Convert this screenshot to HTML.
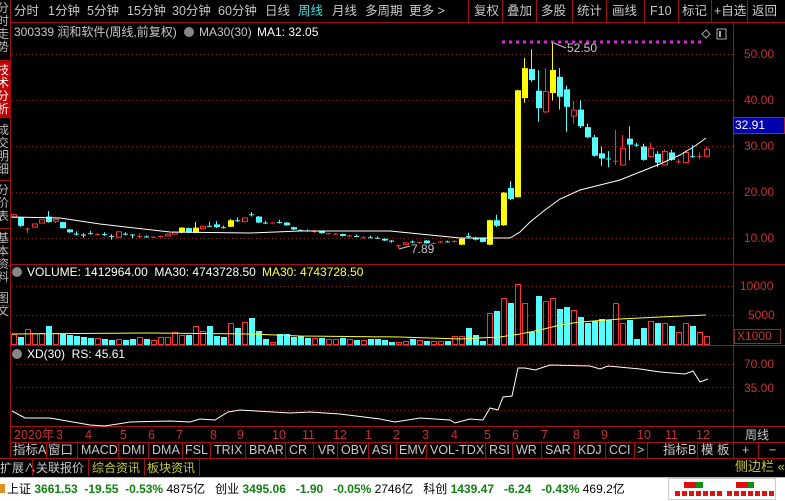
<!DOCTYPE html>
<html><head><meta charset="utf-8">
<style>
*{margin:0;padding:0;box-sizing:border-box}
body{width:785px;height:501px;background:#000;overflow:hidden;position:relative;font-family:"Liberation Sans","Noto Sans CJK SC",sans-serif;font-size:12px;line-height:14px;color:#c8c8c8}
.a{position:absolute;white-space:nowrap}
.tb{top:4px;color:#c8c8c8;font-size:12.5px}
.rl{position:absolute;background:#a01010}
.ax{position:absolute;color:#c83030;font-size:12px;left:744px}
.ind{top:443px;font-size:12.5px;color:#c8c8c8}
.dt{top:428px;color:#c83030;font-size:12.5px}
.st{top:482px;font-size:12px;color:#000}
.g{color:#108010;font-weight:bold}
.vt{position:absolute;left:-3px;font-size:12px;line-height:13px;width:14px;white-space:normal;color:#bbb}
</style></head><body>
<!-- left strip -->
<div class="a" style="left:0;top:0;width:10px;height:458px;background:#000;overflow:hidden">
 <div class="a" style="left:0;top:60px;width:10px;height:58px;background:#c00000"></div>
 <div class="vt" style="top:2px">分时走势</div>
 <div class="vt" style="top:64px;color:#fff">技术分析</div>
 <div class="vt" style="top:124px">成交明细</div>
 <div class="vt" style="top:184px">分价表</div>
 <div class="vt" style="top:232px">基本资料</div>
 <div class="vt" style="top:292px">图文</div>
</div>
<div class="rl" style="left:0;top:60px;width:10px;height:1px"></div>
<div class="rl" style="left:0;top:180px;width:10px;height:1px"></div>
<div class="rl" style="left:0;top:228px;width:10px;height:1px"></div>
<div class="rl" style="left:0;top:265px;width:10px;height:1px"></div>
<div class="rl" style="left:0;top:305px;width:10px;height:1px"></div>
<div class="rl" style="left:10px;top:0;width:1px;height:458px"></div>
<!-- toolbar -->
<div class="a tb" style="left:14px">分时</div>
<div class="a tb" style="left:48px">1分钟</div>
<div class="a tb" style="left:87px">5分钟</div>
<div class="a tb" style="left:127px">15分钟</div>
<div class="a tb" style="left:172px">30分钟</div>
<div class="a tb" style="left:218px">60分钟</div>
<div class="a tb" style="left:265px">日线</div>
<div class="a tb" style="left:298px;color:#40e0e0">周线</div>
<div class="a tb" style="left:332px">月线</div>
<div class="a tb" style="left:365px">多周期</div>
<div class="a tb" style="left:409px">更多 &gt;</div>
<div class="a tb" style="left:474px">复权</div>
<div class="a tb" style="left:507px">叠加</div>
<div class="a tb" style="left:541px">多股</div>
<div class="a tb" style="left:577px">统计</div>
<div class="a tb" style="left:612px">画线</div>
<div class="a tb" style="left:650px">F10</div>
<div class="a tb" style="left:682px">标记</div>
<div class="a tb" style="left:714px">+自选</div>
<div class="a tb" style="left:752px">返回</div>
<div class="rl" style="left:468px;top:0;width:1px;height:22px"></div>
<div class="rl" style="left:502px;top:0;width:1px;height:22px"></div>
<div class="rl" style="left:536px;top:0;width:1px;height:22px"></div>
<div class="rl" style="left:572px;top:0;width:1px;height:22px"></div>
<div class="rl" style="left:606px;top:0;width:1px;height:22px"></div>
<div class="rl" style="left:644px;top:0;width:1px;height:22px"></div>
<div class="rl" style="left:678px;top:0;width:1px;height:22px"></div>
<div class="rl" style="left:711px;top:0;width:1px;height:22px"></div>
<div class="rl" style="left:747px;top:0;width:1px;height:22px"></div>
<div class="rl" style="left:10px;top:22px;width:775px;height:1px"></div>
<!-- titles -->
<div class="a" style="left:14px;top:25px;color:#c8c8c8">300339 润和软件(周线,前复权)</div>
<div class="a" style="left:184px;top:27px;width:10px;height:10px;border-radius:5px;background:#888"></div>
<div class="a" style="left:199px;top:25px;color:#c8c8c8">MA30(30)</div>
<div class="a" style="left:257px;top:25px;color:#fff">MA1: 32.05</div>
<div class="a" style="left:12px;top:267px;width:10px;height:10px;border-radius:5px;background:#888"></div>
<div class="a" style="left:27px;top:265px;color:#fff">VOLUME: 1412964.00&nbsp; MA30: 4743728.50</div>
<div class="a" style="left:262px;top:265px;color:#ffff40">MA30: 4743728.50</div>
<div class="a" style="left:12px;top:349px;width:10px;height:10px;border-radius:5px;background:#888"></div>
<div class="a" style="left:27px;top:347px;color:#fff">XD(30)&nbsp; RS: 45.61</div>
<!-- axis -->
<div class="rl" style="left:733px;top:22px;width:1px;height:420px"></div>
<div class="ax" style="top:47px">50.00</div>
<div class="ax" style="top:93px">40.00</div>
<div class="a" style="left:733px;top:117px;width:52px;height:17px;background:#0000b0;border:1px solid #b02020;color:#fff;padding-left:1px;line-height:15px">32.91</div>
<div class="ax" style="top:139px">30.00</div>
<div class="ax" style="top:185px">20.00</div>
<div class="ax" style="top:231px">10.00</div>
<div class="ax" style="top:279px;left:740px">10000</div>
<div class="ax" style="top:308px;left:748px">5000</div>
<div class="a" style="left:734px;top:329px;width:47px;height:15px;border:1px solid #803030;color:#c83030;line-height:13px;padding-left:2px">X1000</div>
<div class="ax" style="top:357px">70.00</div>
<div class="ax" style="top:381px">35.00</div>
<div class="rl" style="left:10px;top:264px;width:775px;height:1px"></div>
<div class="rl" style="left:10px;top:345px;width:775px;height:1px"></div>
<div class="rl" style="left:10px;top:426px;width:775px;height:1px"></div>
<svg class="a" style="left:0;top:0" width="785" height="501" id="sv">
<g stroke="#802020" stroke-dasharray="1,3" stroke-width="1">
<line x1="12" y1="54.5" x2="733" y2="54.5"/><line x1="12" y1="100.5" x2="733" y2="100.5"/><line x1="12" y1="146.5" x2="733" y2="146.5"/><line x1="12" y1="192.5" x2="733" y2="192.5"/><line x1="12" y1="238.5" x2="733" y2="238.5"/>
<line x1="12" y1="286.5" x2="733" y2="286.5"/><line x1="12" y1="315.5" x2="733" y2="315.5"/>
<line x1="12" y1="364.5" x2="733" y2="364.5"/><line x1="12" y1="387.5" x2="733" y2="387.5"/><line x1="12" y1="410.5" x2="733" y2="410.5"/>
</g>
<line x1="502" y1="42" x2="702" y2="42" stroke="#e020e0" stroke-width="3" stroke-dasharray="3,4"/>
<g id="cd"></g>
<polyline fill="none" stroke="#fff" stroke-width="1" points="12,217 60,218 100,224 170,232 250,233 300,231 390,231 430,235 460,238 510,238 520,232 530,222 545,210 560,199 580,190 600,185 620,180 640,172 660,164 680,155 695,146 706,138"/>
<polyline fill="none" stroke="#ffff30" stroke-width="1" points="12,334 150,333 250,334 300,336 400,337 460,339 500,337 520,334 540,330 560,325 580,322 620,319 660,317 706,315"/>
<polyline fill="none" stroke="#fff" stroke-width="1" points="12,411 25,418 50,418 90,425 105,426 130,422 170,421 190,422 200,419 215,420 228,412 240,410 290,413 310,412 340,414 380,419 395,422 420,418 450,420 455,423 470,419 483,420 490,408 498,410 503,397 512,396 518,368 525,368 535,370 550,365 590,366 600,369 608,366 640,369 660,372 685,374 693,371 700,382 708,379"/>
<text x="567" y="52" fill="#c8c8c8" font-size="12" font-family="Liberation Sans">52.50</text>
<line x1="554" y1="43" x2="566" y2="48" stroke="#c8c8c8"/>
<text x="411" y="253" fill="#c8c8c8" font-size="12" font-family="Liberation Sans">7.89</text>
<line x1="399" y1="249" x2="410" y2="246" stroke="#c8c8c8"/>
<path d="M706 30 l4 4 -4 4 -4 -4z" fill="none" stroke="#aaa"/>
<rect x="717" y="29" width="9" height="10" fill="none" stroke="#aaa"/><rect x="719" y="31" width="2" height="6" fill="#aaa"/>
</svg>
<!-- date axis -->
<div class="a dt" style="left:14px">2020年</div>
<div class="a dt" style="left:56px">3</div><div class="a dt" style="left:85px">4</div><div class="a dt" style="left:120px">5</div><div class="a dt" style="left:148px">6</div><div class="a dt" style="left:176px">7</div><div class="a dt" style="left:210px">8</div><div class="a dt" style="left:237px">9</div><div class="a dt" style="left:272px">10</div><div class="a dt" style="left:302px">11</div><div class="a dt" style="left:333px">12</div><div class="a dt" style="left:365px">1</div><div class="a dt" style="left:393px">2</div><div class="a dt" style="left:422px">3</div><div class="a dt" style="left:451px">4</div><div class="a dt" style="left:484px">5</div><div class="a dt" style="left:512px">6</div><div class="a dt" style="left:541px">7</div><div class="a dt" style="left:573px">8</div><div class="a dt" style="left:601px">9</div><div class="a dt" style="left:637px">10</div><div class="a dt" style="left:665px">11</div><div class="a dt" style="left:696px">12</div>
<div class="a" style="left:745px;top:428px;color:#c8c8c8">周线</div>
<div class="rl" style="left:10px;top:442px;width:775px;height:1px"></div>
<!-- indicator tabs -->
<div class="a ind" style="left:13px">指标A</div><div class="a ind" style="left:48px">窗口</div><div class="a ind" style="left:81px">MACD</div><div class="a ind" style="left:122px">DMI</div><div class="a ind" style="left:152px">DMA</div><div class="a ind" style="left:185px">FSL</div><div class="a ind" style="left:214px">TRIX</div><div class="a ind" style="left:249px">BRAR</div><div class="a ind" style="left:289px">CR</div><div class="a ind" style="left:318px">VR</div><div class="a ind" style="left:341px">OBV</div><div class="a ind" style="left:372px">ASI</div><div class="a ind" style="left:399px">EMV</div><div class="a ind" style="left:430px">VOL-TDX</div><div class="a ind" style="left:489px">RSI</div><div class="a ind" style="left:516px">WR</div><div class="a ind" style="left:545px">SAR</div><div class="a ind" style="left:578px">KDJ</div><div class="a ind" style="left:609px">CCI</div><div class="a ind" style="left:637px">&gt;</div><div class="a ind" style="left:663px">指标B</div><div class="a ind" style="left:701px">模 板</div><div class="a ind" style="left:742px">+</div><div class="a ind" style="left:769px">−</div>
<div class="rl" style="left:46px;top:442px;width:1px;height:16px"></div><div class="rl" style="left:77px;top:442px;width:1px;height:16px"></div><div class="rl" style="left:118px;top:442px;width:1px;height:16px"></div><div class="rl" style="left:148px;top:442px;width:1px;height:16px"></div><div class="rl" style="left:182px;top:442px;width:1px;height:16px"></div><div class="rl" style="left:210px;top:442px;width:1px;height:16px"></div><div class="rl" style="left:245px;top:442px;width:1px;height:16px"></div><div class="rl" style="left:285px;top:442px;width:1px;height:16px"></div><div class="rl" style="left:313px;top:442px;width:1px;height:16px"></div><div class="rl" style="left:337px;top:442px;width:1px;height:16px"></div><div class="rl" style="left:368px;top:442px;width:1px;height:16px"></div><div class="rl" style="left:396px;top:442px;width:1px;height:16px"></div><div class="rl" style="left:426px;top:442px;width:1px;height:16px"></div><div class="rl" style="left:485px;top:442px;width:1px;height:16px"></div><div class="rl" style="left:512px;top:442px;width:1px;height:16px"></div><div class="rl" style="left:541px;top:442px;width:1px;height:16px"></div><div class="rl" style="left:574px;top:442px;width:1px;height:16px"></div><div class="rl" style="left:605px;top:442px;width:1px;height:16px"></div><div class="rl" style="left:634px;top:442px;width:1px;height:16px"></div><div class="rl" style="left:647px;top:442px;width:1px;height:16px"></div><div class="rl" style="left:697px;top:442px;width:1px;height:16px"></div><div class="rl" style="left:733px;top:442px;width:1px;height:16px"></div><div class="rl" style="left:758px;top:442px;width:1px;height:16px"></div>
<div class="rl" style="left:0;top:458px;width:785px;height:1px"></div>
<!-- ext row -->
<div class="a" style="left:0;top:461px;color:#c8c8c8">扩展∧</div>
<div class="a" style="left:36px;top:461px;color:#c8c8c8">关联报价</div>
<div class="a" style="left:92px;top:461px;color:#c8c840">综合资讯</div>
<div class="a" style="left:147px;top:461px;color:#c8c840">板块资讯</div>
<div class="rl" style="left:32px;top:458px;width:1px;height:18px"></div><div class="rl" style="left:88px;top:458px;width:1px;height:18px"></div><div class="rl" style="left:144px;top:458px;width:1px;height:18px"></div><div class="rl" style="left:199px;top:458px;width:1px;height:18px"></div>
<div class="a" style="left:735px;top:460px;color:#c8c840;font-size:13px">侧边栏 «</div>
<!-- status bar -->
<div class="a" style="left:0;top:477px;width:785px;height:24px;background:#fff;border-top:1px solid #bbb"></div>
<div class="a" style="left:0;top:484px;width:5px;height:9px;background:#e09020"></div>
<div class="a st" style="left:7px">上证 <span class="g">3661.53&nbsp; -19.55&nbsp; -0.53%</span> 4875亿&nbsp;&nbsp; 创业 <span class="g">3495.06&nbsp;&nbsp; -1.90&nbsp;&nbsp; -0.05%</span> 2746亿&nbsp;&nbsp; 科创 <span class="g">1439.47&nbsp;&nbsp; -6.24&nbsp;&nbsp; -0.43%</span> 469.2亿</div>
<div class="a" style="left:668px;top:478px;width:108px;height:22px;border:1px solid #ccc"></div>
<div class="a" style="left:684px;top:482px;width:12px;height:6px;background:#e01010"></div><div class="a" style="left:696px;top:482px;width:7px;height:6px;background:#109010"></div>
<div class="a" style="left:736px;top:482px;width:12px;height:6px;background:#e01010"></div><div class="a" style="left:748px;top:482px;width:6px;height:6px;background:#109010"></div>
<div class="a" style="left:675px;top:491px;width:48px;height:5px;background:repeating-linear-gradient(90deg,#e01010 0 5px,transparent 5px 7px)"></div>
<div class="a" style="left:727px;top:491px;width:48px;height:5px;background:repeating-linear-gradient(90deg,#e01010 0 5px,transparent 5px 7px)"></div>
<script>
(function(){
var D=[[14.6,15.2,15.4,14.5,'r'],[14.6,12.8,14.8,12.6,'c'],[12.0,12.2,12.4,11.2,'r'],[12.5,13.2,13.3,12.4,'r'],[13.4,14.1,14.2,13.3,'r'],[14.8,13.6,16.0,13.5,'c'],[13.8,14.2,14.3,13.4,'r'],[13.6,12.3,13.7,12.2,'c'],[12.0,11.4,12.1,11.2,'c'],[11.1,11.0,11.6,10.7,'c'],[10.9,10.8,11.2,10.2,'c'],[11.2,11.1,11.7,10.9,'c'],[10.9,11.0,11.2,10.8,'r'],[11.0,10.8,11.4,10.6,'c'],[10.6,10.5,11.0,9.8,'c'],[10.3,11.5,11.6,10.2,'r'],[11.1,10.9,11.4,10.7,'c'],[10.9,10.6,11.0,10.1,'c'],[10.6,10.6,11.1,10.2,'r'],[10.5,10.4,10.7,10.2,'c'],[10.4,10.4,10.6,10.3,'r'],[10.3,10.6,10.7,10.3,'r'],[10.6,11.0,11.1,10.5,'r'],[11.0,11.4,11.6,10.9,'r'],[11.3,12.4,12.5,11.2,'y'],[12.3,11.3,12.4,11.2,'c'],[11.3,12.4,13.6,11.2,'y'],[12.2,12.7,12.8,12.1,'r'],[12.8,12.8,13.7,12.6,'c'],[13.1,12.5,13.8,12.3,'c'],[12.5,12.5,12.9,12.2,'c'],[12.6,14.0,14.3,12.5,'y'],[14.0,14.0,14.6,13.6,'c'],[13.7,14.5,14.6,13.6,'r'],[15.3,15.0,15.8,14.8,'c'],[14.8,13.5,14.9,13.4,'c'],[13.5,13.4,13.9,13.2,'c'],[13.4,13.5,13.6,13.4,'r'],[13.6,13.5,14.1,13.3,'c'],[13.5,12.9,13.6,12.8,'c'],[12.5,12.0,12.6,11.9,'c'],[11.9,11.8,12.0,11.6,'c'],[11.8,11.7,12.0,11.6,'c'],[11.4,11.7,11.9,11.3,'r'],[11.6,11.2,11.7,11.1,'c'],[11.0,11.2,11.3,10.9,'r'],[10.9,11.1,11.2,10.8,'r'],[11.0,10.6,11.1,10.5,'c'],[10.5,10.7,10.8,10.4,'r'],[10.6,10.6,10.9,10.4,'c'],[10.3,10.3,10.6,10.1,'r'],[10.3,10.3,10.7,10.2,'c'],[10.2,10.2,10.5,10.0,'c'],[10.0,9.6,10.1,9.5,'c'],[9.6,9.3,9.7,9.1,'c'],[8.3,8.6,8.7,7.89,'r'],[8.7,9.1,9.2,8.6,'r'],[9.4,9.1,9.6,9.0,'c'],[9.0,9.3,9.3,8.9,'r'],[9.6,9.0,9.7,8.9,'c'],[8.9,9.1,9.2,8.8,'r'],[9.1,9.4,9.5,9.0,'r'],[9.4,9.4,9.6,9.3,'c'],[9.5,9.5,9.7,9.4,'r'],[8.7,10.0,10.2,8.6,'y'],[10.6,10.6,11.3,10.2,'c'],[10.2,9.8,10.4,9.6,'c'],[10.1,9.3,10.2,9.2,'c'],[8.7,14.0,14.1,8.6,'y'],[14.0,12.8,15.2,12.5,'c'],[12.9,20.0,20.1,12.8,'y'],[21.0,18.6,22.5,18.4,'c'],[19.0,42.2,42.3,18.9,'y'],[40.5,47.0,49.2,39.5,'y'],[46.8,44.4,51.1,44.0,'c'],[42.1,38.3,46.5,35.4,'c'],[37.5,41.9,47.0,37.2,'r'],[41.6,46.6,52.5,40.0,'y'],[45.1,40.8,47.0,38.0,'c'],[42.4,38.6,43.2,33.2,'c'],[36.6,37.9,39.9,35.0,'r'],[38.0,34.4,40.0,34.0,'c'],[34.2,32.0,35.0,31.8,'c'],[32.0,28.0,32.5,27.8,'c'],[28.5,27.4,30.0,25.8,'c'],[27.4,27.4,29.0,25.5,'c'],[26.8,26.9,33.6,26.0,'r'],[26.0,29.6,32.5,25.9,'r'],[31.7,30.4,34.4,27.0,'c'],[30.4,30.4,30.8,29.9,'c'],[30.0,27.1,30.6,26.9,'c'],[27.8,29.6,30.8,27.6,'r'],[28.4,26.5,29.0,25.5,'c'],[26.0,28.9,29.4,25.9,'r'],[28.7,27.1,29.3,26.9,'c'],[26.7,26.8,27.3,26.4,'r'],[26.5,28.7,29.2,26.4,'r'],[27.9,27.9,30.3,27.6,'c'],[27.9,27.9,28.7,27.3,'r'],[27.9,29.4,30.0,27.7,'r']];
var V=[11,8,16,12,12,19,12,11,10,9,8,7,7,6,5,6,5,6,8,6,5,8,8,13,10,10,19,14,19,9,8,22,17,23,27,14,6,3,11,11,8,9,7,7,7,6,6,7,6,5,5,6,6,5,3,3,4,6,5,4,4,4,4,9,9,17,10,4,32,34,47,42,61,42,13,49,44,47,36,38,35,28,22,24,26,25,42,22,25,6,17,24,22,22,19,13,22,19,13,9];
function Y(p){return 238.7-(p-10)*4.61}
var s='';
for(var i=0;i<D.length;i++){var d=D[i],x=13+7*i,o=Y(d[0]),c=Y(d[1]),h=Y(d[2]),l=Y(d[3]);
var col=d[4]=='c'?'#54ffff':(d[4]=='y'?'#ffff00':'#ff3232');
var bt=Math.min(o,c),bh=Math.abs(o-c);
s+='<line x1="'+(x+.5)+'" y1="'+h+'" x2="'+(x+.5)+'" y2="'+l+'" stroke="'+col+'"/>';
if(bh<1.5){s+='<line x1="'+(x-2)+'" y1="'+(bt+.5)+'" x2="'+(x+3)+'" y2="'+(bt+.5)+'" stroke="'+col+'"/>';}
else if(d[4]=='r'){s+='<rect x="'+(x-1.5)+'" y="'+bt+'" width="5" height="'+bh+'" fill="#000" stroke="'+col+'"/>';}
else{s+='<rect x="'+(x-2)+'" y="'+bt+'" width="6" height="'+bh+'" fill="'+col+'"/>';}
var vh=V[i];
if(d[4]=='c'){s+='<rect x="'+(x-2)+'" y="'+(345-vh)+'" width="6" height="'+vh+'" fill="#54ffff"/>';}
else{s+='<rect x="'+(x-1.5)+'" y="'+(345-vh+.5)+'" width="5" height="'+(vh-1)+'" fill="none" stroke="#ff3232"/>';}
}
document.getElementById('cd').innerHTML=s;
})();
</script>
</body></html>
